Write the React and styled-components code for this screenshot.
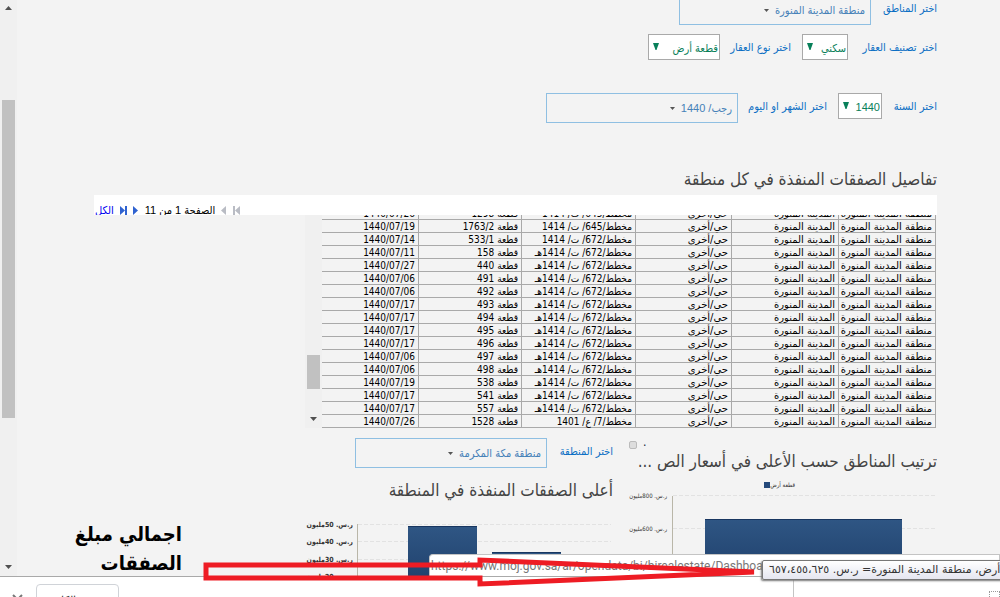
import React from 'react';
import styled, { createGlobalStyle } from 'styled-components';

const GlobalStyle = createGlobalStyle`
  * {
    box-sizing: border-box;
  }
  body {
    margin: 0;
    overflow: hidden;
    background: #f3f3f3;
    font-family: 'DejaVu Sans Condensed', 'DejaVu Sans', sans-serif;
  }
`;

const Window = styled.div`
  position: relative;
  display: flex;
  flex-direction: column;
  height: 100vh;
  overflow: hidden;
`;

const Viewport = styled.div`
  flex: 1;
  display: flex;
  min-height: 0;
`;

const ScrollTrack = styled.div`
  flex: none;
  display: flex;
  flex-direction: column;
  align-items: center;
  justify-content: space-between;
  width: 17px;
  padding: 6px 0 7px;
  background: #f0f0f0;
`;

const ScrollThumb = styled.div`
  width: 13px;
  height: ${(props) => props.$size}px;
  margin-top: ${(props) => props.$top}px;
  margin-bottom: auto;
  background: #c1c1c1;
`;

const Page = styled.main`
  flex: 1;
  min-width: 0;
  padding: 0 63px 0 77px;
  overflow: hidden;
`;

// the page is scrolled, so the first row starts above the window
const Filters = styled.form`
  display: flex;
  flex-direction: column;
  margin-top: -5px;
`;

const FilterRow = styled.div`
  display: flex;
  align-items: flex-start;
  height: 30px;
  margin-top: ${(props) => props.$top || 0}px;
`;

const Label = styled.label`
  flex: none;
  width: ${(props) => props.$width}px;
  margin-left: 14px;
  line-height: 28px;
  font-size: 11px;
  white-space: nowrap;
  color: #0b6fc4;
`;

const SelectBox = styled.div`
  position: relative;
  width: ${(props) => props.$width}px;
  margin-left: 11px;
  svg {
    position: absolute;
    top: 9px;
    left: 5px;
  }
`;

const Select = styled.select`
  display: block;
  appearance: none;
  width: 100%;
  height: 26px;
  padding: 2px 1px 0;
  border: 1px solid #a9a9a9;
  border-radius: 0;
  background: #fff;
  line-height: 22px;
  font-family: 'Liberation Sans', 'DejaVu Sans Condensed', sans-serif;
  font-size: 11px;
  color: #08805a;
`;

const Picker = styled.button`
  display: flex;
  align-items: center;
  gap: 6px;
  width: 192px;
  height: 30px;
  padding: 0 5px;
  border: 1px solid #8fbfe2;
  background: transparent;
  font-family: 'Liberation Sans', 'DejaVu Sans Condensed', sans-serif;
  font-size: 11px;
  white-space: nowrap;
  color: #4681b8;
`;

const Title = styled.h2`
  height: 24px;
  margin: ${(props) => props.$top}px 0 0;
  line-height: 22px;
  font-size: 17px;
  font-weight: 400;
  white-space: nowrap;
  color: #444;
`;

const Pager = styled.nav`
  display: flex;
  justify-content: flex-end;
  align-items: center;
  gap: 6px;
  height: 20px;
  margin-top: 3px;
  padding: 11px 0 0 1px;
  overflow: hidden;
  background: #fff;
  font-family: 'Liberation Sans', 'DejaVu Sans Condensed', sans-serif;
  font-size: 11px;
  white-space: nowrap;
  a {
    color: #0000ee;
    text-decoration: none;
  }
`;

const IconButton = styled.button`
  display: flex;
  padding: 0;
  border: none;
  background: none;
`;

const TableArea = styled.div`
  display: flex;
  width: 632px;
  height: 213px;
  overflow: hidden;
`;

const TableClip = styled.div`
  flex: 1;
  display: flex;
  flex-direction: column;
  justify-content: flex-end;
  padding-right: 1px;
  overflow: hidden;
`;

const DealsTable = styled.table`
  width: 100%;
  table-layout: fixed;
  border-collapse: collapse;
  font-size: 10px;
  color: #000;
`;

const Cell = styled.td`
  height: 13px;
  padding: 2px 3px 0;
  border: 1px solid #a9a9a9;
  border-left: none;
  line-height: 10px;
  font-family: ${(props) =>
    props.$wide ? "'DejaVu Sans'" : "'DejaVu Sans Condensed'"}, sans-serif;
  white-space: nowrap;
`;

const Panels = styled.div`
  display: grid;
  grid-template-columns: 308px 308px 1fr;
  column-gap: 16px;
`;

const Panel = styled.section`
  padding-top: 10px;
  svg {
    display: block;
  }
`;

const CheckRow = styled.label`
  display: flex;
  justify-content: flex-end;
  gap: 6px;
  height: 12px;
  line-height: 8px;
  font-size: 12px;
  color: #123;
  input {
    appearance: none;
    width: 8px;
    height: 8px;
    margin: 3px 0 0;
    border: 1px solid #bbb;
    border-radius: 2px;
    background: #ddd;
  }
`;

const Total = styled.h1`
  margin: 82px 107px 0 0;
  line-height: 29px;
  font-size: 20px;
  font-weight: 700;
  white-space: nowrap;
  color: #000;
`;

const ChartText = styled.text`
  direction: rtl;
  font-size: ${(props) => props.$size}px;
  font-weight: ${(props) => (props.$bold ? 700 : 400)};
  fill: #333;
`;

const StatusBubble = styled.div`
  position: absolute;
  right: 0;
  bottom: 20px;
  left: 429px;
  height: 23px;
  padding: 0 1px;
  border: 1px solid #c4c4c4;
  border-bottom-color: #aaa;
  border-radius: 4px 0 0 0;
  background: #fff;
  line-height: 22px;
  font-family: Roboto, sans-serif;
  font-size: 12px;
  white-space: nowrap;
  color: #777;
`;

const Tooltip = styled.div`
  position: absolute;
  bottom: 17px;
  left: 762px;
  width: max-content;
  height: 20px;
  padding: 0 6px;
  border: 1px solid #777;
  border-radius: 2px;
  background: linear-gradient(#fff, #e5e6f0);
  box-shadow: -1px 1px 2px #777;
  line-height: 18px;
  font-family: 'DejaVu Sans', sans-serif;
  font-size: 11px;
  white-space: nowrap;
  color: #333;
`;

const Marker = styled.svg`
  position: absolute;
  bottom: 7px;
  left: 200px;
`;

const DownloadBar = styled.footer`
  flex: none;
  display: flex;
  align-items: flex-start;
  height: 21px;
  padding: 7px 0 0 12px;
  overflow: hidden;
  border-top: 1px solid #a9a9a9;
  background: #fff;
`;

const DownloadItem = styled.button`
  width: 83px;
  height: 32px;
  margin-left: 13px;
  padding: 0 24px 0 0;
  border: 1px solid #d0d3d8;
  border-radius: 4px;
  background: #fff;
  font-size: 11px;
  color: #333;
`;

const CloseButton = styled(IconButton)`
  margin-top: 10px;
`;

const Divider = styled.div`
  width: 1px;
  height: 40px;
  margin: -7px 195px 0 auto;
  background: #c4c4c4;
`;

const Corner = styled.span`
  width: 11px;
  height: 12px;
  margin-top: 7px;
  border: 1px dotted #999;
`;

const deals = [
  ['مخطط/645/ ت/ 1414', 'قطعة 1298', '1440/07/26'],
  ['مخطط/645/ ت/ 1414', 'قطعة 1763/2', '1440/07/19'],
  ['مخطط/672/ ت/ 1414', 'قطعة 533/1', '1440/07/14'],
  ['مخطط/672/ ت/ 1414هـ', 'قطعة 158', '1440/07/11'],
  ['مخطط/672/ ت/ 1414هـ', 'قطعة 440', '1440/07/27'],
  ['مخطط/672/ ت/ 1414هـ', 'قطعة 491', '1440/07/06'],
  ['مخطط/672/ ت/ 1414هـ', 'قطعة 492', '1440/07/06'],
  ['مخطط/672/ ت/ 1414هـ', 'قطعة 493', '1440/07/17'],
  ['مخطط/672/ ت/ 1414هـ', 'قطعة 494', '1440/07/17'],
  ['مخطط/672/ ت/ 1414هـ', 'قطعة 495', '1440/07/17'],
  ['مخطط/672/ ت/ 1414هـ', 'قطعة 496', '1440/07/17'],
  ['مخطط/672/ ت/ 1414هـ', 'قطعة 497', '1440/07/06'],
  ['مخطط/672/ ت/ 1414هـ', 'قطعة 498', '1440/07/06'],
  ['مخطط/672/ ت/ 1414هـ', 'قطعة 538', '1440/07/19'],
  ['مخطط/672/ ت/ 1414هـ', 'قطعة 541', '1440/07/17'],
  ['مخطط/672/ ت/ 1414هـ', 'قطعة 557', '1440/07/17'],
  ['مخطط/7/ ع/ 1401', 'قطعة 1528', '1440/07/26'],
];

const ArrowIcon = ({ up }) => (
  <svg width="7" height="4">
    <path d={up ? 'M0 4 3.5 0 7 4z' : 'M0 0h7L3.5 4z'} fill="#505050" />
  </svg>
);

const PageIcon = ({ bar, left, color }) => (
  <svg width={bar ? 7 : 6} height="9">
    <path
      d={
        left
          ? bar
            ? 'M7 0v9L2 4.5z'
            : 'M5 0v9L0 4.5z'
          : 'M0 0v9l5-4.5z'
      }
      fill={color}
    />
    {bar && <path d={left ? 'M0 0h2v9H0z' : 'M5 0h2v9H5z'} fill={color} />}
  </svg>
);

const SelectField = ({ id, label, labelWidth, width, value }) => (
  <>
    <Label htmlFor={id} $width={labelWidth}>
      {label}
    </Label>
    <SelectBox $width={width}>
      <Select id={id} defaultValue={value}>
        <option>{value}</option>
      </Select>
      <svg width="6" height="7">
        <path d="M0 0h6L3.5 7h-1z" fill="#08805a" />
      </svg>
    </SelectBox>
  </>
);

const PickerField = ({ id, label, labelWidth, value }) => (
  <>
    <Label htmlFor={id} $width={labelWidth}>
      {label}
    </Label>
    <Picker id={id} type="button">
      {value}
      <svg width="5" height="3">
        <path d="M0 0h5L2.5 3z" fill="#555" />
      </svg>
    </Picker>
  </>
);

const BarFill = () => (
  <defs>
    <linearGradient id="bar" x1="0" y1="0" x2="0" y2="1">
      <stop offset="0" stopColor="#2f5684" />
      <stop offset="1" stopColor="#1d3d68" />
    </linearGradient>
  </defs>
);

const RegionsChart = () => (
  <svg width="308" height="110">
    <BarFill />
    <rect x="135" y="8" width="6" height="6" fill="#24497a" />
    <ChartText x="166" y="13" $size={6}>
      قطعة أرض
    </ChartText>
    <path d="M44 21.5H306M44 54.5H306" stroke="#e2e2e2" strokeDasharray="4 2" />
    <path d="M43.5 22V110" stroke="#b9b6a8" />
    <ChartText x="38" y="24" $size={6}>
      ر.س. 800مليون
    </ChartText>
    <ChartText x="38" y="57" $size={6}>
      ر.س. 600مليون
    </ChartText>
    <rect x="76" y="45" width="197" height="65" fill="url(#bar)" />
    <path d="M76 45.5H273" stroke="#183660" />
  </svg>
);

const DealsChart = () => (
  <svg width="308" height="90">
    <BarFill />
    <path
      d="M53 21.5H306M53 38.5H306M53 56.5H306"
      stroke="#e2e2e2"
      strokeDasharray="4 2"
    />
    <path d="M52.5 21V90" stroke="#b9b6a8" />
    {[50, 40, 30, 20].map((value, i) => (
      <ChartText key={value} x="48" y={24 + Math.round(i * 17.3)} $size={7} $bold>
        ر.س. {value}مليون
      </ChartText>
    ))}
    <rect x="103" y="23" width="69" height="67" fill="url(#bar)" />
    <rect x="187" y="49" width="69" height="41" fill="url(#bar)" />
    <path d="M103 23.5h69M187 49.5h69" stroke="#183660" />
  </svg>
);

const App = () => {
  return (
    <Window>
      <GlobalStyle />
      <Viewport>
        <ScrollTrack>
          <ArrowIcon up />
          <ScrollThumb $size={318} $top={90} />
          <ArrowIcon />
        </ScrollTrack>
        <Page dir="rtl" lang="ar">
          <Filters>
            <FilterRow>
              <PickerField
                id="regions"
                label="اختر المناطق"
                labelWidth={52}
                value="منطقة المدينة المنورة"
              />
            </FilterRow>
            <FilterRow $top={9}>
              <SelectField
                id="category"
                label="اختر تصنيف العقار"
                labelWidth={75}
                width={46}
                value="سكني"
              />
              <SelectField
                id="kind"
                label="اختر نوع العقار"
                labelWidth={57}
                width={72}
                value="قطعة أرض"
              />
            </FilterRow>
            <FilterRow $top={29}>
              <SelectField
                id="year"
                label="اختر السنة"
                labelWidth={41}
                width={44}
                value="1440"
              />
              <PickerField
                id="month"
                label="اختر الشهر او اليوم"
                labelWidth={75}
                value="رجب/ 1440"
              />
            </FilterRow>
          </Filters>
          <Title $top={45}>تفاصيل الصفقات المنفذة في كل منطقة</Title>
          <Pager>
            <IconButton aria-label="الأولى">
              <PageIcon bar left color="#b9bcc4" />
            </IconButton>
            <IconButton aria-label="السابقة">
              <PageIcon left color="#b9bcc4" />
            </IconButton>
            <span>الصفحة 1 من 11</span>
            <IconButton aria-label="التالية">
              <PageIcon color="#2f62d0" />
            </IconButton>
            <IconButton aria-label="الأخيرة">
              <PageIcon bar color="#2f62d0" />
            </IconButton>
            <a href="#all">الكل</a>
          </Pager>
          <TableArea>
            <TableClip>
              <DealsTable>
                <colgroup>
                  <col width="97" />
                  <col width="107" />
                  <col width="96" />
                  <col width="114" />
                  <col width="103" />
                  <col />
                </colgroup>
                <tbody>
                  {deals.map(([plan, plot, date], i) => (
                    <tr key={i}>
                      <Cell $wide>منطقة المدينة المنورة</Cell>
                      <Cell $wide>المدينة المنورة</Cell>
                      <Cell $wide>حي/أخرى</Cell>
                      <Cell>{plan}</Cell>
                      <Cell>{plot}</Cell>
                      <Cell>{date}</Cell>
                    </tr>
                  ))}
                </tbody>
              </DealsTable>
            </TableClip>
            <ScrollTrack>
              <ScrollThumb $size={34} $top={134} />
              <ArrowIcon />
            </ScrollTrack>
          </TableArea>
          <Panels>
            <Panel>
              <CheckRow>
                .
                <input type="checkbox" />
              </CheckRow>
              <Title $top={0}>ترتيب المناطق حسب الأعلى في أسعار الص ...</Title>
              <RegionsChart />
            </Panel>
            <Panel>
              <FilterRow>
                <PickerField
                  id="region"
                  label="اختر المنطقة"
                  labelWidth={52}
                  value="منطقة مكة المكرمة"
                />
              </FilterRow>
              <Title $top={11}>أعلى الصفقات المنفذة في المنطقة</Title>
              <DealsChart />
            </Panel>
            <Panel>
              <Total>
                اجمالي مبلغ
                <br />
                الصفقات
              </Total>
            </Panel>
          </Panels>
        </Page>
      </Viewport>
      <DownloadBar>
        <CloseButton aria-label="إغلاق">
          <svg width="11" height="11">
            <path d="M1 1l9 9M10 1l-9 9" stroke="#777" strokeWidth="2" />
          </svg>
        </CloseButton>
        <DownloadItem>الكل</DownloadItem>
        <Divider />
        <Corner />
      </DownloadBar>
      <StatusBubble>
        https://www.moj.gov.sa/ar/opendata/bi/birealestate/Dashboard
      </StatusBubble>
      <Marker width="565" height="34">
        <path
          d="M6 9H280V4L554 16 280 28V22H6z"
          fill="none"
          stroke="#ee1c24"
          strokeWidth="5"
        />
      </Marker>
      <Tooltip dir="rtl">
        قطعة أرض، منطقة المدينة المنورة= ر.س. ٦٥٧،٤٥٥،٦٢٥
      </Tooltip>
    </Window>
  );
};

export default App;
